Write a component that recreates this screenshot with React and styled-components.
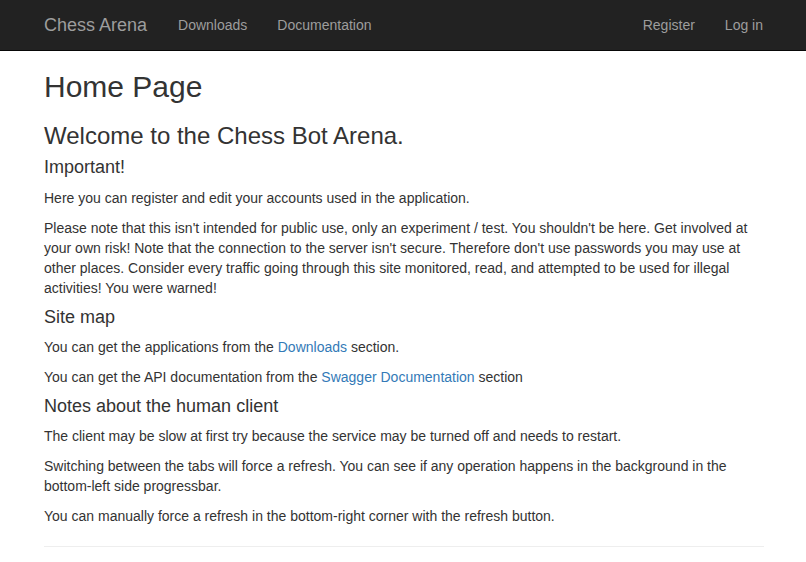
import React from "react";
import styled, { createGlobalStyle } from "styled-components";

const GlobalStyle = createGlobalStyle`
  * {
    box-sizing: border-box;
  }
  html, body {
    margin: 0;
    padding: 0;
    background: #fff;
  }
  body {
    font-family: "Liberation Sans", Arial, Helvetica, sans-serif;
    font-size: 14px;
    line-height: 1.42857143;
    color: #333;
    padding-bottom: 20px;
  }
`;

export default function App() {
  return (
    <>
      <GlobalStyle />
      <Navbar>
        <NavContainer>
          <NavGroup>
            <Brand href="#">Chess Arena</Brand>
            <NavLink href="#">Downloads</NavLink>
            <NavLink href="#">Documentation</NavLink>
          </NavGroup>
          <NavGroup $right>
            <NavLink href="#">Register</NavLink>
            <NavLink href="#">Log in</NavLink>
          </NavGroup>
        </NavContainer>
      </Navbar>

      <Container>
        <PageTitle>Home Page</PageTitle>
        <Welcome>Welcome to the Chess Bot Arena.</Welcome>

        <SubHeading>Important!</SubHeading>
        <Paragraph>
          Here you can register and edit your accounts used in the application.
        </Paragraph>
        <Paragraph>
          Please note that this isn't intended for public use, only an
          experiment / test. You shouldn't be here. Get involved at your own
          risk! Note that the connection to the server isn't secure. Therefore
          don't use passwords you may use at other places. Consider every
          traffic going through this site monitored, read, and attempted to be
          used for illegal activities! You were warned!
        </Paragraph>

        <SubHeading>Site map</SubHeading>
        <Paragraph>
          You can get the applications from the <Link href="#">Downloads</Link>{" "}
          section.
        </Paragraph>
        <Paragraph>
          You can get the API documentation from the{" "}
          <Link href="#">Swagger Documentation</Link> section
        </Paragraph>

        <SubHeading>Notes about the human client</SubHeading>
        <Paragraph>
          The client may be slow at first try because the service may be turned
          off and needs to restart.
        </Paragraph>
        <Paragraph>
          Switching between the tabs will force a refresh. You can see if any
          operation happens in the background in the bottom-left side
          progressbar.
        </Paragraph>
        <Paragraph>
          You can manually force a refresh in the bottom-right corner with the
          refresh button.
        </Paragraph>

        <Rule />
      </Container>
    </>
  );
}

const Navbar = styled.nav`
  background: #222;
  border-bottom: 1px solid #080808;
`;

const NavContainer = styled.div`
  width: 750px;
  margin: 0 auto;
  padding: 0 14px 0 16px;
  display: flex;
  justify-content: space-between;
  align-items: center;
`;

const NavGroup = styled.div`
  display: flex;
  margin-left: ${(p) => (p.$right ? "0" : "-15px")};
  margin-right: ${(p) => (p.$right ? "-14px" : "0")};
`;

const Brand = styled.a`
  display: block;
  height: 50px;
  padding: 15px 16px 15px 15px;
  font-size: 18px;
  line-height: 20px;
  color: #9d9d9d;
  text-decoration: none;
`;

const NavLink = styled.a`
  display: block;
  padding: 15px;
  line-height: 20px;
  color: #9d9d9d;
  text-decoration: none;
`;

const Container = styled.main`
  width: 750px;
  margin: 0 auto;
  padding: 0 14px 0 16px;
`;

const PageTitle = styled.h2`
  font-size: 30px;
  font-weight: 500;
  line-height: 1.1;
  margin: 19px 0 10px;
`;

const Welcome = styled.h3`
  font-size: 24px;
  font-weight: 500;
  line-height: 1.1;
  margin: 20px 0 9px;
`;

const SubHeading = styled.h4`
  font-size: 18px;
  font-weight: 500;
  line-height: 1.1;
  margin: 9px 0 9.5px;
`;

const Paragraph = styled.p`
  margin: 0 0 10px;
`;

const Link = styled.a`
  color: #337ab7;
  text-decoration: none;
`;

const Rule = styled.hr`
  margin: 20px 0;
  border: 0;
  border-top: 1px solid #eee;
`;
